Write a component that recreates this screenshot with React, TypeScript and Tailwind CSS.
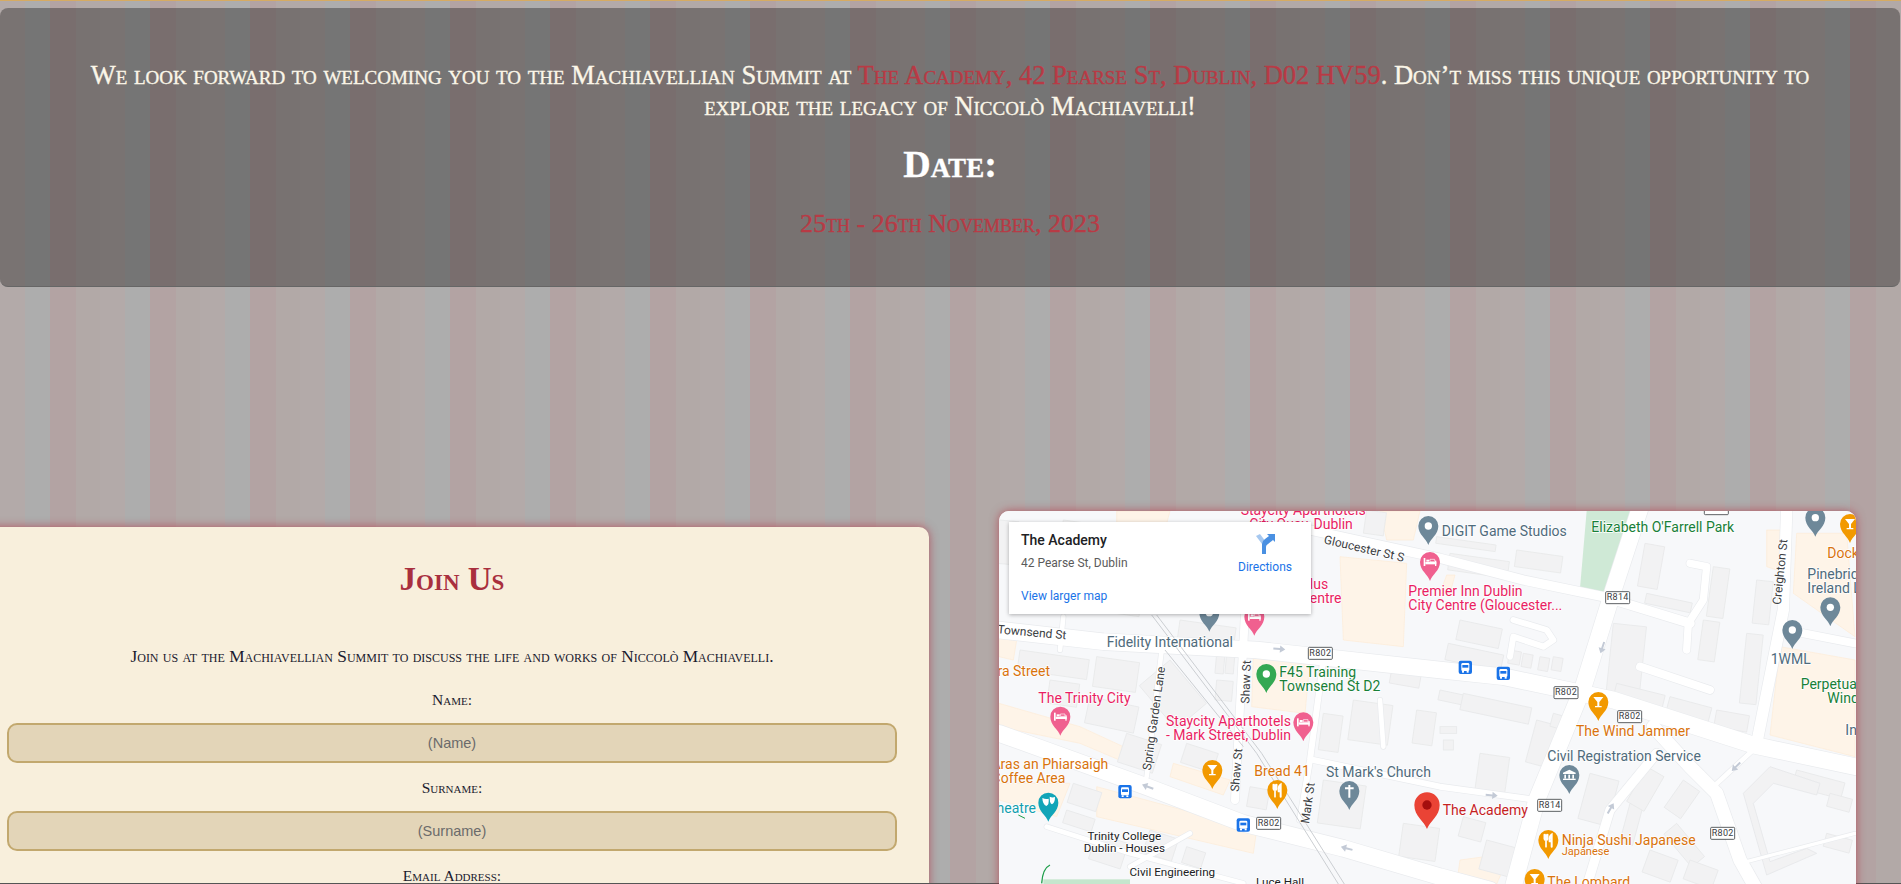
import React from "react";

const PINK = "#e91e63";
const ORANGE = "#d9730d";
const GREEN = "#188038";
const SLATE = "#4f6b7c";
const DARK = "#3c4043";

const peach: string[] = [
  "1050,170 1250,190 1240,440 1060,420",
  "790,470 960,480 945,640 785,620",
  "27,610 270,680 400,740 400,785 270,730 27,680",
  "320,860 800,990 790,1060 320,950",
  "550,790 720,840 700,885 540,830",
  "2370,440 2595,480 2595,770 2340,705",
  "2420,100 2570,100 2595,410 2410,280",
  "27,400 80,420 70,480 27,470",
  "1410,1080 1560,1060 1520,1152 1400,1152",
  "380,33 540,33 530,70 380,70",
  "1170,33 1290,33 1270,120 1190,120",
  "27,850 240,850 200,950 100,920 27,900",
  "1370,225 1395,225 1380,280 1350,280",
  "2330,90 2380,90 2360,210 2330,200",
];

const buildings: [number, number, number, number, number][] = [
  [560, 120, 200, 110, 8], [220, 60, 120, 90, 8], [240, 240, 220, 80, 8], [570, 360, 170, 70, 8],
  [90, 450, 210, 60, 8], [320, 470, 130, 90, 8], [300, 590, 150, 80, 12], [540, 480, 170, 120, 50],
  [680, 540, 50, 60, 5], [680, 460, 25, 60, 5], [710, 460, 25, 60, 5], [410, 700, 110, 90, 18],
  [590, 730, 100, 60, 18], [250, 850, 90, 60, 18], [230, 930, 90, 40, 18], [320, 1000, 100, 80, 18],
  [480, 990, 90, 70, 18], [590, 1040, 60, 50, 18], [780, 860, 60, 60, 10], [1000, 840, 130, 130, 8],
  [1240, 970, 110, 100, 8], [1130, 30, 60, 70, 8], [1090, 600, 120, 120, 8],
  [1280, 630, 60, 100, 8], [1410, 360, 130, 60, 12], [1375, 430, 170, 50, 12], [1560, 450, 35, 40, 10],
  [1600, 460, 30, 40, 10], [1650, 470, 30, 40, 10], [1690, 470, 30, 40, 10], [1350, 570, 260, 30, 12],
  [1420, 580, 210, 50, 12], [1350, 680, 50, 20, 0], [1360, 720, 30, 30, 0], [1470, 760, 90, 120, 8],
  [1340, 110, 180, 20, 8], [1380, 160, 180, 50, 8], [1580, 150, 140, 50, 8], [1965, 130, 60, 130, 10],
  [1970, 280, 140, 30, 12], [2170, 200, 50, 150, 8], [2140, 360, 50, 120, 8], [1870, 370, 100, 210, 6],
  [1880, 550, 150, 50, 14], [2040, 590, 130, 60, 15], [2180, 630, 100, 50, 10], [2270, 400, 50, 210, 6],
  [2300, 240, 50, 130, 6], [1640, 660, 70, 130, 15], [1690, 640, 40, 40, 15], [1800, 820, 90, 140, 15],
  [1920, 910, 40, 120, 15], [1970, 800, 60, 120, 30], [2080, 840, 60, 100, 35], [2060, 970, 130, 50, 50],
  [1490, 1020, 90, 90, 15], [1980, 1050, 90, 70, 20], [2100, 1080, 90, 60, 20], [2420, 810, 150, 50, 15],
  [2510, 1000, 80, 40, 15], [2520, 880, 70, 40, 15], [27, 60, 60, 130, 5],
  [180, 540, 90, 70, 8], [1210, 480, 90, 70, 10], [1000, 640, 60, 110, 8], [1420, 950, 70, 60, 15],
];

const roads: [string, number][] = [
  ["27,390 340,425 800,450 1350,510 1540,530 1730,570 1870,600 2290,735 2595,800", 50],
  ["27,700 470,860 760,970 1060,1045 1350,1130 1500,1170", 50],
  ["1950,25 1870,270 1780,560 1640,900 1570,1160", 50],
  ["960,90 1350,175 1600,240 1840,290 2100,370", 28],
  ["2390,33 2380,330 2300,730", 34],
  ["1990,680 2100,800 2180,880 2250,1080 2295,1160", 40],
  ["2170,860 2300,740", 14],
  ["1790,1160 1860,930 2000,760", 28],
  ["765,340 735,900", 24],
  ["515,450 470,830", 14],
  ["1000,480 960,780 930,960", 18],
  ["970,780 1350,860 1640,900", 18],
  ["2390,390 2595,430", 24],
  ["2100,190 2150,200 2140,300 2095,370 2090,450", 22],
  ["1570,360 1670,390 1690,420 1660,440 1570,410 1560,470", 18],
  ["1950,500 2160,570", 24],
  ["220,350 210,450", 14],
  ["1170,600 1180,740", 14],
  ["2250,1090 2595,1000", 10],
  ["600,1000 420,1100", 14],
  ["170,980 420,1060 760,1150", 14],
];

type Lbl = { t: string; x: number; y: number; c: string; s?: number; a?: "start" | "middle" | "end"; r?: number };
const labels: Lbl[] = [
  { t: "Staycity Aparthotels", x: 752, y: 45, c: PINK },
  { t: "City Quay, Dublin", x: 778, y: 88, c: PINK },
  { t: "Plus", x: 933, y: 268, c: PINK },
  { t: "Centre", x: 932, y: 310, c: PINK },
  { t: "Premier Inn Dublin", x: 1255, y: 288, c: PINK },
  { t: "City Centre (Gloucester...", x: 1255, y: 330, c: PINK },
  { t: "Gloucester St S", x: 1000, y: 130, c: DARK, s: 36, r: 13 },
  { t: "Townsend St", x: 228, y: 418, c: DARK, s: 36, a: "end", r: 5 },
  { t: "Fidelity International", x: 350, y: 442, c: SLATE },
  { t: "Tara Street", x: 180, y: 528, c: ORANGE, a: "end" },
  { t: "The Trinity City", x: 145, y: 608, c: PINK },
  { t: "Spring Garden Lane", x: 482, y: 812, c: DARK, s: 36, r: -82 },
  { t: "Shaw St", x: 778, y: 611, c: DARK, s: 36, r: -88 },
  { t: "Shaw St", x: 746, y: 876, c: DARK, s: 36, r: -85 },
  { t: "F45 Training", x: 868, y: 530, c: GREEN },
  { t: "Townsend St D2", x: 868, y: 572, c: GREEN },
  { t: "Staycity Aparthotels", x: 528, y: 678, c: PINK },
  { t: "- Mark Street, Dublin", x: 528, y: 720, c: PINK },
  { t: "Áras an Phiarsaigh", x: 355, y: 807, c: ORANGE, a: "end" },
  { t: "Coffee Area", x: 226, y: 849, c: ORANGE, a: "end" },
  { t: "Theatre", x: 138, y: 938, c: "#129eaf", a: "end" },
  { t: "Bread 41", x: 793, y: 827, c: ORANGE },
  { t: "St Mark's Church", x: 1008, y: 830, c: SLATE },
  { t: "Mark St", x: 957, y: 972, c: DARK, s: 36, r: -82 },
  { t: "Trinity College", x: 403, y: 1019, c: "#202124", s: 35, a: "middle" },
  { t: "Dublin - Houses", x: 403, y: 1055, c: "#202124", s: 35, a: "middle" },
  { t: "Civil Engineering", x: 547, y: 1127, c: "#202124", s: 35, a: "middle" },
  { t: "Luce Hall", x: 870, y: 1158, c: "#202124", s: 35, a: "middle" },
  { t: "The Academy", x: 1358, y: 945, c: "#c5221f" },
  { t: "Ninja Sushi Japanese", x: 1715, y: 1035, c: ORANGE },
  { t: "Japanese", x: 1715, y: 1066, c: ORANGE, s: 33 },
  { t: "The Lombard", x: 1672, y: 1162, c: ORANGE },
  { t: "The Wind Jammer", x: 1758, y: 707, c: ORANGE },
  { t: "Civil Registration Service", x: 1672, y: 783, c: SLATE },
  { t: "DIGIT Game Studios", x: 1355, y: 108, c: SLATE },
  { t: "Elizabeth O'Farrell Park", x: 1804, y: 95, c: GREEN },
  { t: "Creighton St", x: 2372, y: 315, c: DARK, s: 36, r: -84 },
  { t: "Dock", x: 2512, y: 173, c: ORANGE },
  { t: "Pinebridge", x: 2452, y: 237, c: SLATE },
  { t: "Ireland Ltd", x: 2452, y: 279, c: SLATE },
  { t: "1WML", x: 2342, y: 492, c: SLATE },
  { t: "Perpetual", x: 2432, y: 567, c: GREEN },
  { t: "Windows", x: 2512, y: 609, c: GREEN },
  { t: "Interiors", x: 2566, y: 705, c: SLATE },
];

const shields: [number, number, string][] = [
  [955, 442, "R802"], [800, 952, "R802"], [1692, 560, "R802"], [1883, 632, "R802"],
  [2162, 982, "R802"], [1847, 275, "R814"], [1643, 898, "R814"], [2143, 8, "R814"],
];

function Pin({ x, y, c, k }: { x: number; y: number; c: string; k: string }) {
  return (
    <g transform={`translate(${x} ${y})`}>
      <path d="M0 57 C-6 38 -30 26 -30 0 A30 30 0 1 1 30 0 C30 26 6 38 0 57Z" fill={c} />
      {k === "dot" && <circle r="11" fill="#fff" />}
      {k === "bed" && (
        <g fill="#fff">
          <rect x="-19" y="-12" width="5" height="24" />
          <rect x="-14" y="0" width="33" height="7" />
          <rect x="15" y="-4" width="4" height="16" />
          <rect x="-11" y="-7" width="9" height="6" />
          <path d="M0 -8 H14 V-1 H0Z" fill="none" stroke="#fff" strokeWidth="2" />
        </g>
      )}
      {k === "bar" && <path d="M-15 -15 H15 L3 0 V12 H10 V16 H-10 V12 H-3 V0Z" fill="#fff" />}
      {k === "food" && (
        <g stroke="#fff" strokeLinecap="round" fill="none">
          <path d="M-12 -16 V-4 Q-12 0 -7 0 Q-2 0 -2 -4 V-16 M-7 -16 V20" strokeWidth="5" />
          <path d="M10 20 V-16 Q2 -10 4 4 H10" strokeWidth="6" />
        </g>
      )}
      {k === "cross" && <path d="M0 -18 V20 M-13 -8 H13" stroke="#fff" strokeWidth="6" />}
      {k === "bank" && (
        <g fill="#fff">
          <path d="M0 -16 L19 -7 V-3 H-19 V-7Z" />
          <rect x="-15" y="-1" width="5" height="12" />
          <rect x="-3" y="-1" width="5" height="12" />
          <rect x="9" y="-1" width="5" height="12" />
          <rect x="-19" y="11" width="38" height="4" />
        </g>
      )}
      {k === "mask" && (
        <g fill="#fff">
          <path d="M-18 -14 Q-8 -9 1 -12 Q3 6 -6 10 Q-17 6 -18 -14Z" />
          <path d="M4 -18 Q12 -14 20 -17 Q20 0 11 5 Q7 3 5 -3Z" />
        </g>
      )}
    </g>
  );
}

function Bus({ x, y }: { x: number; y: number }) {
  return (
    <g transform={`translate(${x} ${y})`}>
      <rect x="-20" y="-20" width="40" height="40" rx="6" fill="#1a73e8" />
      <rect x="-12" y="-13" width="24" height="24" rx="4" fill="#fff" />
      <rect x="-9" y="-7" width="18" height="8" fill="#1a73e8" />
      <rect x="-10" y="11" width="6" height="5" fill="#fff" />
      <rect x="4" y="11" width="6" height="5" fill="#fff" />
    </g>
  );
}

function Arrow({ x, y, r }: { x: number; y: number; r: number }) {
  return (
    <path transform={`translate(${x} ${y}) rotate(${r})`} d="M-18 -3 H2 V-11 L18 0 L2 11 V3 H-18Z" fill="#c3cad6" />
  );
}

function MapDrawing() {
  return (
    <svg viewBox="27 33 2571 1119" className="block w-[857px] h-[373px]" fontFamily="Roboto, sans-serif">
      <rect x="0" y="0" width="2700" height="1200" fill="#f7f8fa" />
      {peach.map((p, i) => (
        <polygon key={i} points={p} fill="#fef4e8" stroke="#fdebd7" strokeWidth="2" />
      ))}
      <polygon points="1790,33 1925,33 1860,285 1770,265" fill="#cfe9d6" />
      <rect x="160" y="1138" width="260" height="20" fill="#c5e6cd" />
      <path d="M180 1095 Q158 1105 155 1150" fill="none" stroke="#1e9e4a" strokeWidth="4" />
      <path d="M85 945 L105 955" fill="none" stroke="#1e9e4a" strokeWidth="3" />
      {buildings.map(([x, y, w, h, r], i) => (
        <rect key={i} x={x} y={y} width={w} height={h} transform={`rotate(${r} ${x} ${y})`} fill="#f2f2f3" stroke="#e8e9ea" strokeWidth="2.5" />
      ))}
      <polygon points="2260,880 2340,800 2490,850 2480,885 2350,850 2290,910 2340,1085 2450,1045 2480,1060 2330,1125" fill="#f2f2f3" stroke="#e6e7e9" strokeWidth="2.5" />
      {roads.map(([p, w], i) => (
        <polyline key={`o${i}`} points={p} fill="none" stroke="#e9ebee" strokeWidth={w + 4} strokeLinecap="round" strokeLinejoin="round" />
      ))}
      {roads.map(([p, w], i) => (
        <polyline key={`r${i}`} points={p} fill="none" stroke="#ffffff" strokeWidth={w} strokeLinecap="round" strokeLinejoin="round" />
      ))}
      <g fill="none" stroke="#cbced2" strokeWidth="3">
        <path d="M485 345 L800 760 L1050 1160" />
        <path d="M500 345 L815 760 L1068 1160" />
        <path d="M525 450 L760 740" />
      </g>
      <Arrow x={868} y={447} r={5} />
      <Arrow x={473} y={860} r={200} />
      <Arrow x={1070} y={1045} r={195} />
      <Arrow x={1505} y={886} r={5} />
      <Arrow x={1837} y={443} r={108} />
      <Arrow x={2238} y={800} r={135} />
      <Arrow x={1862} y={925} r={-60} />
      {shields.map(([x, y, t], i) => (
        <g key={i}>
          <rect x={x} y={y} width={72} height={36} rx="3" fill="#fff" stroke="#3c4043" strokeWidth="2.5" />
          <text x={x + 36} y={y + 26} textAnchor="middle" fontSize="27" fill="#3c4043" letterSpacing="1">{t}</text>
        </g>
      ))}
      {labels.map((l, i) => (
        <text
          key={i}
          x={l.x}
          y={l.y}
          fontSize={l.s ?? 42}
          fill={l.c}
          textAnchor={l.a ?? "start"}
          transform={l.r ? `rotate(${l.r} ${l.x} ${l.y})` : undefined}
          stroke="#fff"
          strokeWidth="4"
          paintOrder="stroke"
        >
          {l.t}
        </text>
      ))}
      <Pin x={1315} y={78} c="#6e8899" k="dot" />
      <Pin x={658} y={338} c="#6e8899" k="dot" />
      <Pin x={2476} y={53} c="#6e8899" k="dot" />
      <Pin x={2521} y={322} c="#6e8899" k="dot" />
      <Pin x={2407} y={390} c="#6e8899" k="dot" />
      <Pin x={1320} y={186} c="#f0608f" k="bed" />
      <Pin x={793} y={350} c="#f0608f" k="bed" />
      <Pin x={211} y={650} c="#f0608f" k="bed" />
      <Pin x={940} y={667} c="#f0608f" k="bed" />
      <Pin x={829} y={522} c="#34a853" k="dot" />
      <Pin x={667} y={810} c="#f29900" k="bar" />
      <Pin x={1825} y={606} c="#f29900" k="bar" />
      <Pin x={2580} y={72} c="#f29900" k="bar" />
      <Pin x={1634} y={1137} c="#f29900" k="bar" />
      <Pin x={862} y={870} c="#f29900" k="food" />
      <Pin x={1675} y={1020} c="#f29900" k="food" />
      <Pin x={1078} y={873} c="#6e8899" k="cross" />
      <Pin x={1738} y={825} c="#6e8899" k="bank" />
      <Pin x={175} y={908} c="#12a5b8" k="mask" />
      <g transform="translate(1311 915)">
        <path d="M0 72 C-8 48 -38 34 -38 0 A38 38 0 1 1 38 0 C38 34 8 48 0 72Z" fill="#ea4335" />
        <circle r="14" fill="#a50e0e" />
      </g>
      <Bus x={405} y={875} />
      <Bus x={760} y={975} />
      <Bus x={1426} y={502} />
      <Bus x={1540} y={520} />
    </svg>
  );
}

function Field({ label, hint }: { label: string; hint: string }) {
  return (
    <>
      <label className="block h-5 mt-[15px] text-center text-[15.5px] leading-5 text-[#1a1a2e] [font-variant:small-caps]">{label}</label>
      <input
        readOnly
        placeholder={hint}
        className="block mt-[13px] w-[890px] h-[40px] rounded-[10px] border-2 border-[#c2a86e] bg-[#e3d5b8] text-center text-[14.5px] font-['Liberation_Sans',sans-serif] placeholder:text-[#6b6b6b] outline-none"
      />
    </>
  );
}

export default function App() {
  return (
    <div className="flex flex-col w-[1901px] h-[884px] overflow-hidden font-['Liberation_Serif',serif] bg-[repeating-linear-gradient(90deg,#b3aaa9_0px,#b3aaa9_25px,#adadad_25px,#adadad_50px,#b3a3a3_50px,#b3a3a3_76px,#b2a9a7_76px,#b2a9a7_100px)]">
      <div className="h-px shrink-0 bg-[#d6ab62]" />
      <section className="shrink-0 mt-[7px] h-[279px] w-[1900px] rounded-lg border-b border-[#666] bg-[rgba(0,0,0,0.32)] pt-[52px] text-center text-[#fbf6e8] [font-variant:small-caps] [-webkit-text-stroke:0.35px_currentColor]">
        <p className="text-[26.5px] leading-[31px]">
          We look forward to welcoming you to the Machiavellian Summit at{" "}
          <span className="text-[#b83a45]">The Academy, 42 Pearse St, Dublin, D02 HV59</span>. Don’t miss this unique opportunity to
          <br />
          explore the legacy of Niccolò Machiavelli!
        </p>
        <h2 className="mt-[20px] text-[38px] leading-[44px] font-bold text-white">Date:</h2>
        <p className="mt-[22px] text-[26px] leading-[32px] text-[#b83a45]">25th - 26th November, 2023</p>
      </section>
      <div className="flex flex-1 min-h-0 items-start ml-[-25px] mt-[224px]">
        <form className="shrink-0 mt-[16px] w-[954px] h-[400px] rounded-[10px] bg-[#f8efdc] pl-[32px] shadow-[0_0_10px_rgba(178,48,64,0.7)]">
          <div className="w-[890px]">
            <h2 className="pt-[32px] text-center text-[33px] leading-10 font-bold text-[#a92f3e] [font-variant:small-caps]">Join Us</h2>
            <p className="mt-[46px] text-center text-[17.3px] leading-6 text-[#1a1a2e] [font-variant:small-caps]">
              Join us at the Machiavellian Summit to discuss the life and works of Niccolò Machiavelli.
            </p>
            <div className="mt-[21px]">
              <Field label="Name:" hint="(Name)" />
              <Field label="Surname:" hint="(Surname)" />
              <label className="block h-5 mt-[15px] text-center text-[15.5px] leading-5 text-[#1a1a2e] [font-variant:small-caps]">Email Address:</label>
            </div>
          </div>
        </form>
        <div className="relative shrink-0 ml-[70px] w-[857px] h-[400px] overflow-hidden rounded-t-[10px] bg-[#f7f8fa] shadow-[0_0_10px_rgba(178,48,64,0.7)]">
          <MapDrawing />
          <div className="absolute left-[10px] top-[11px] w-[302px] h-[92px] bg-white shadow-[0_1px_4px_rgba(0,0,0,0.3)] font-['Roboto',sans-serif]">
            <div className="absolute left-[12px] top-[8px] text-[14px] leading-5 font-medium text-[#202124]">The Academy</div>
            <div className="absolute left-[12px] top-[32px] text-[12px] leading-[18px] text-[#5b5b5b]">42 Pearse St, Dublin</div>
            <div className="absolute left-[12px] top-[65px] text-[12px] leading-[18px] text-[#1a73e8]">View larger map</div>
            <div className="absolute left-[226px] top-[12px] w-[60px] flex flex-col items-center">
              <svg width="20" height="20" viewBox="0 0 20 20">
                <path d="M1 2 L5 0 L11 8 V20 H7 V10Z" fill="#a6c8f0" />
                <path d="M7 20 V10 Q7 7 10 5 L14 2 L12 0 H20 V8 L18 6 L13 10 Q11 11 11 13 V20Z" fill="#4a90e2" />
              </svg>
              <div className="mt-[4px] text-[12px] leading-[18px] text-[#1a73e8]">Directions</div>
            </div>
          </div>
        </div>
      </div>
      <div className="h-px shrink-0 bg-[#555]" />
    </div>
  );
}
